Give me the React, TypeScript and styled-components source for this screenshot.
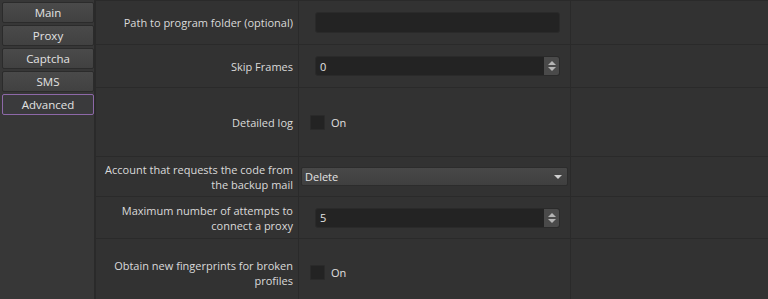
import React from "react";
import styled, { createGlobalStyle } from "styled-components";

const GlobalStyle = createGlobalStyle`
  html, body {
    margin: 0;
    padding: 0;
    background: #323232;
    overflow: hidden;
  }
  body {
    font-family: "Open Sans", "Noto Sans", sans-serif;
    font-size: 11px;
    color: #dadada;
  }
`;

const Layout = styled.div`
  display: flex;
  width: 768px;
  height: 299px;
  overflow: hidden;
`;

const Sidebar = styled.div`
  width: 96px;
  flex: none;
  background: #373737;
  border-right: 2px solid #2a2a2a;
  padding: 2px 0 0 2px;
  box-sizing: border-box;
  display: flex;
  flex-direction: column;
  gap: 2px;
`;

const TabButton = styled.div<{ $active?: boolean }>`
  height: 21px;
  width: 92px;
  box-sizing: border-box;
  border-radius: 2px;
  border: 1px solid ${(p) => (p.$active ? "#8d68a8" : "#2b2b2b")};
  background: ${(p) =>
    p.$active ? "#3a3a3c" : "linear-gradient(#4a4a4a, #414141)"};
  display: flex;
  align-items: center;
  justify-content: center;
  color: #e2e2e2;
  font-size: 11.5px;
`;

const Settings = styled.div`
  flex: 1;
  border-top: 1px solid #2a2a2a;
  display: flex;
  flex-direction: column;
`;

const Row = styled.div<{ $h: number }>`
  display: grid;
  grid-template-columns: 203px 272px 1fr;
  height: ${(p) => p.$h}px;
  flex: none;
  box-sizing: border-box;
  border-bottom: 1px solid #2a2a2a;
`;

const LabelCell = styled.div`
  display: flex;
  align-items: center;
  justify-content: flex-end;
  text-align: right;
  padding: 0 5px 0 6px;
  line-height: 15px;
  border-right: 1px solid #2a2a2a;
`;

const ControlCell = styled.div<{ $pad: number }>`
  display: flex;
  align-items: center;
  padding-left: ${(p) => p.$pad}px;
  border-right: 1px solid #2a2a2a;
`;

const EmptyCell = styled.div``;

const TextField = styled.div`
  width: 245px;
  height: 21px;
  box-sizing: border-box;
  background: #232323;
  border: 1px solid #2a2a2a;
  border-radius: 3px;
`;

const SpinBox = styled.div`
  width: 245px;
  height: 20px;
  box-sizing: border-box;
  background: #232323;
  border: 1px solid #2a2a2a;
  border-radius: 3px;
  display: flex;
  align-items: center;
  overflow: hidden;
`;

const SpinValue = styled.span`
  flex: 1;
  padding-left: 4px;
  color: #e4e4e4;
`;

const SpinButtons = styled.div`
  width: 15px;
  height: 100%;
  background: #4a4a4a;
  display: flex;
  flex-direction: column;
  align-items: center;
  justify-content: center;
  gap: 2px;
`;

const Arrow = styled.div<{ $up?: boolean }>`
  width: 0;
  height: 0;
  border-left: 4px solid transparent;
  border-right: 4px solid transparent;
  ${(p) =>
    p.$up
      ? "border-bottom: 4px solid #b4b4b4;"
      : "border-top: 4px solid #b4b4b4;"}
`;

const Select = styled.div`
  width: 267px;
  height: 19px;
  box-sizing: border-box;
  background: linear-gradient(#484848, #3f3f3f);
  border: 1px solid #2c2c2c;
  border-radius: 2px;
  display: flex;
  align-items: center;
  justify-content: space-between;
  padding: 0 5px 0 3px;
  color: #e4e4e4;
`;

const SelectArrow = styled.div`
  width: 0;
  height: 0;
  border-left: 4px solid transparent;
  border-right: 4px solid transparent;
  border-top: 4px solid #d0d0d0;
`;

const Check = styled.label`
  display: flex;
  align-items: center;
  gap: 6px;
  color: #e0e0e0;
`;

const CheckBox = styled.span`
  width: 15px;
  height: 15px;
  box-sizing: border-box;
  background: #232323;
  border: 1px solid #2a2a2a;
  border-radius: 1px;
`;

const tabs = ["Main", "Proxy", "Captcha", "SMS", "Advanced"];

function Spinner({ value }: { value: string }) {
  return (
    <SpinBox>
      <SpinValue>{value}</SpinValue>
      <SpinButtons>
        <Arrow $up />
        <Arrow />
      </SpinButtons>
    </SpinBox>
  );
}

function Toggle() {
  return (
    <Check>
      <CheckBox />
      On
    </Check>
  );
}

export default function App() {
  return (
    <>
      <GlobalStyle />
      <Layout>
        <Sidebar>
          {tabs.map((t) => (
            <TabButton key={t} $active={t === "Advanced"}>
              {t}
            </TabButton>
          ))}
        </Sidebar>
        <Settings>
          <Row $h={44}>
            <LabelCell>Path to program folder (optional)</LabelCell>
            <ControlCell $pad={16}>
              <TextField />
            </ControlCell>
            <EmptyCell />
          </Row>
          <Row $h={43}>
            <LabelCell>Skip Frames</LabelCell>
            <ControlCell $pad={16}>
              <Spinner value="0" />
            </ControlCell>
            <EmptyCell />
          </Row>
          <Row $h={69}>
            <LabelCell>Detailed log</LabelCell>
            <ControlCell $pad={11}>
              <Toggle />
            </ControlCell>
            <EmptyCell />
          </Row>
          <Row $h={40}>
            <LabelCell>
              Account that requests the code from
              <br />
              the backup mail
            </LabelCell>
            <ControlCell $pad={2}>
              <Select>
                Delete
                <SelectArrow />
              </Select>
            </ControlCell>
            <EmptyCell />
          </Row>
          <Row $h={42}>
            <LabelCell>
              Maximum number of attempts to
              <br />
              connect a proxy
            </LabelCell>
            <ControlCell $pad={16}>
              <Spinner value="5" />
            </ControlCell>
            <EmptyCell />
          </Row>
          <Row $h={68}>
            <LabelCell>
              Obtain new fingerprints for broken
              <br />
              profiles
            </LabelCell>
            <ControlCell $pad={11}>
              <Toggle />
            </ControlCell>
            <EmptyCell />
          </Row>
        </Settings>
      </Layout>
    </>
  );
}
